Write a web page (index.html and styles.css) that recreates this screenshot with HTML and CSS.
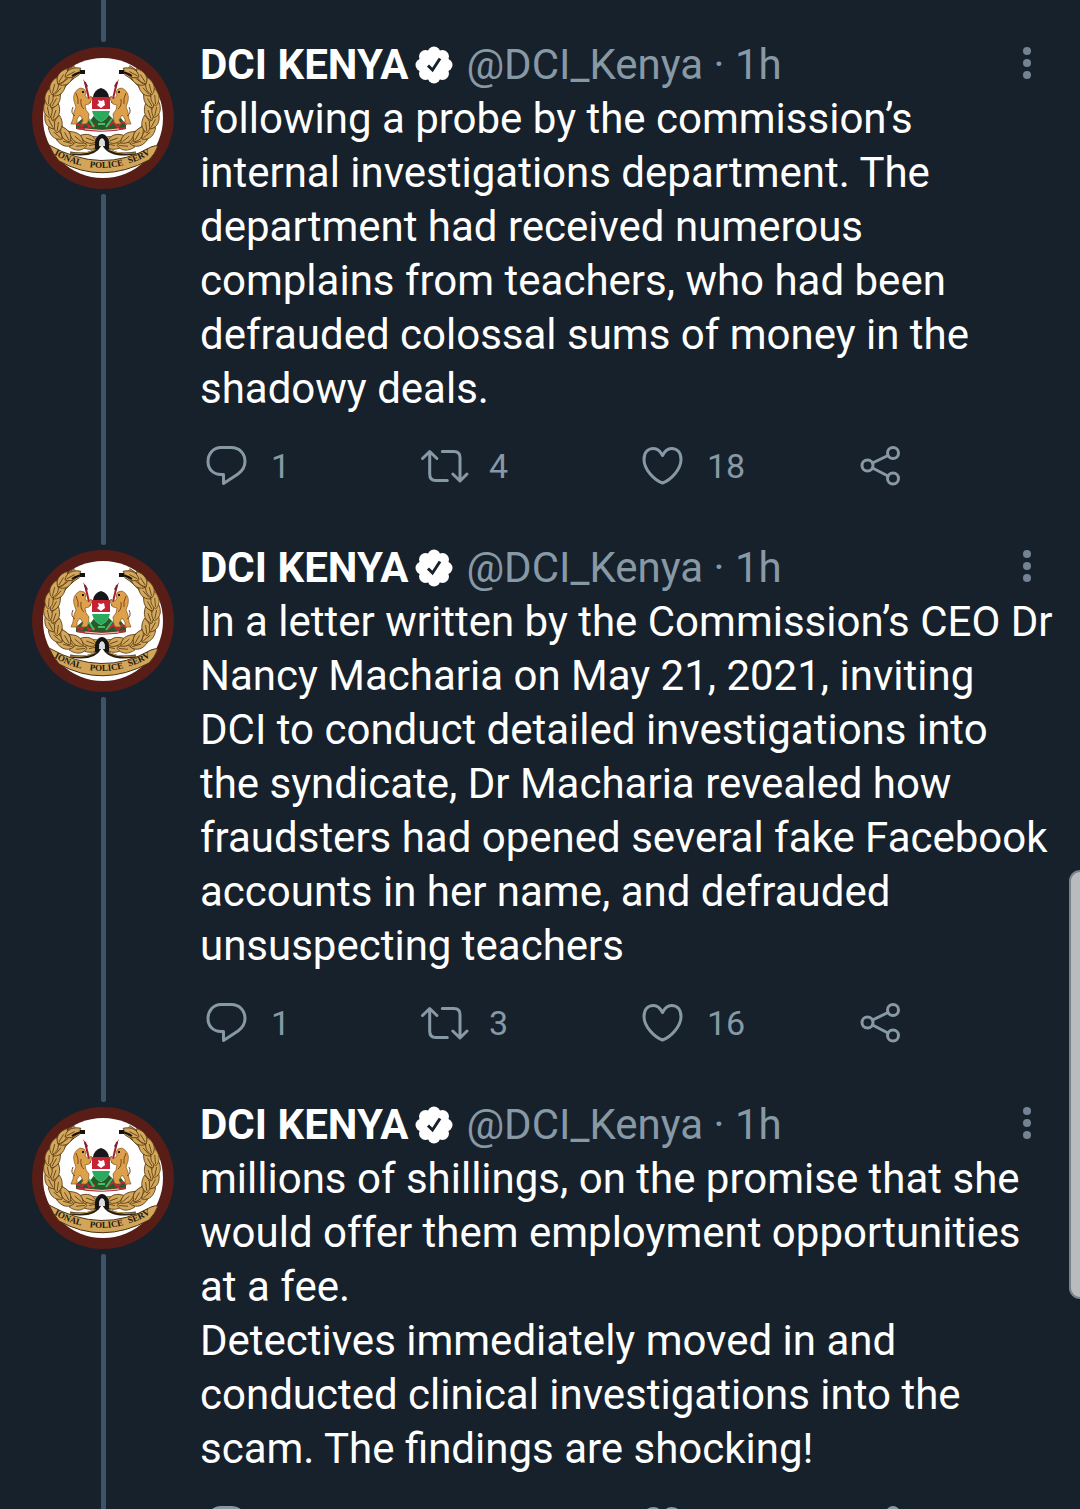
FILE: index.html
```html
<!DOCTYPE html>
<html lang="en">

<head>
    <meta charset="utf-8">
    <meta name="viewport" content="width=device-width, initial-scale=1.0">
    <title>DCI KENYA thread</title>
    <link rel="stylesheet" href="styles.css">
</head>

<body>

<!-- shared icons -->
<svg class="sprite" aria-hidden="true">
    <symbol id="badge" viewBox="0 0 38 38">
        <g fill="#fff">
            <circle cx="19" cy="19" r="15"/>
            <circle cx="19" cy="7" r="6.500"/>
            <circle cx="27.500" cy="10.500" r="6.500"/>
            <circle cx="31" cy="19" r="6.500"/>
            <circle cx="27.500" cy="27.500" r="6.500"/>
            <circle cx="19" cy="31" r="6.500"/>
            <circle cx="10.500" cy="27.500" r="6.500"/>
            <circle cx="7" cy="19" r="6.500"/>
            <circle cx="10.500" cy="10.500" r="6.500"/>
        </g>
        <path d="M13 19.500l4.500 4.500L25 12.500" fill="none" stroke="#17212b" stroke-width="3"/>
    </symbol>
    <symbol id="reply" viewBox="0 0 52 52">
        <path d="M21 7.500h10C40 7.500 45 14 45 21.500c0 5.500-3 9.500-7 12.500L23.500 43.500v-9H21C13 34.500 8 29 8 21.500S13 7.500 21 7.500z"/>
    </symbol>
    <symbol id="retweet" viewBox="0 0 52 52">
        <path d="M4.500 18.500l7.200-7 7.200 7M11.700 12V34q0 6.500 6 6.500h11.600M24.300 11.500H36q6 0 6 6V41M34.800 34l7.200 7 7-7"/>
    </symbol>
    <symbol id="heart" viewBox="0 0 52 52">
        <path d="M26.500 15.500C24 10.500 21 8.500 17.500 8.500 11.500 8.500 8 13 8 19.500c0 10 10.500 21 18.500 23.500C34.500 40.500 45 29.500 45 19.500c0-6.500-3.500-11-9.500-11-3.500 0-6.500 2-9 7z"/>
    </symbol>
    <symbol id="share" viewBox="0 0 52 52">
        <circle cx="13.500" cy="25.500" r="5.500"/>
        <circle cx="39" cy="13" r="5.500"/>
        <circle cx="39" cy="38.500" r="5.500"/>
        <path d="M18.500 23l15.500-7.500M18.500 28l15.500 8"/>
    </symbol>
    <symbol id="dots" viewBox="0 0 54 52">
        <circle cx="27" cy="12" r="4"/>
        <circle cx="27" cy="24" r="4"/>
        <circle cx="27" cy="36" r="4"/>
    </symbol>

    <!-- police service crest -->
    <symbol id="crest" viewBox="0 0 142 142">
        <defs>
            <path id="leaf" d="M0 8C-6 3-5-4 0-10 5-4 6 3 0 8zM0 6V-3" fill="#d3a75c" stroke="#5a3d12" stroke-width=".8"/>
            <g id="branch">
                <path d="M45 23C28 33 20 48 20 64c0 18 13 31 45 31" fill="none" stroke="#2b1c08" stroke-width="11"/>
                <path d="M45 23C28 33 20 48 20 64c0 18 13 31 45 31" fill="none" stroke="#cfa256" stroke-width="10"/>
                <use href="#leaf" transform="translate(60 98) rotate(-102)"/>
                <use href="#leaf" transform="translate(57 92) rotate(-70)"/>
                <use href="#leaf" transform="translate(47 99) rotate(-95)"/>
                <use href="#leaf" transform="translate(45 91) rotate(-50)"/>
                <use href="#leaf" transform="translate(34 95) rotate(-75)"/>
                <use href="#leaf" transform="translate(34 88) rotate(-30)"/>
                <use href="#leaf" transform="translate(24 87) rotate(-50)"/>
                <use href="#leaf" transform="translate(26 78) rotate(8)"/>
                <use href="#leaf" transform="translate(18 75) rotate(-28)"/>
                <use href="#leaf" transform="translate(23 66) rotate(20)"/>
                <use href="#leaf" transform="translate(16 63) rotate(-12)"/>
                <use href="#leaf" transform="translate(23 54) rotate(30)"/>
                <use href="#leaf" transform="translate(17 51) rotate(5)"/>
                <use href="#leaf" transform="translate(27 43) rotate(42)"/>
                <use href="#leaf" transform="translate(22 40) rotate(15)"/>
                <use href="#leaf" transform="translate(34 33) rotate(52)"/>
                <use href="#leaf" transform="translate(30 30) rotate(32)"/>
                <use href="#leaf" transform="translate(40 26) rotate(62)"/>
                <path d="M40 29q6-4 13-4" fill="none" stroke="#17120c" stroke-width="2"/>
                <path d="M48 25h5" stroke="#17120c" stroke-width="4"/>
            </g>
            <!-- lion holding a spear -->
            <g id="lion">
                <path d="M58 56L53 35" stroke="#a3222b" stroke-width="2"/>
                <path d="M51 32l5 7-2 2z" fill="#7b2430"/>
                <path d="M48 41q5 0 6 4l-1 4 4 3 2-3 1 3-3 5-4 1 1 5 3 4-1 8-2 2h-5l2-4-3-5-3 4v5h-6l2-5 1-7 2-5-2-6q-2-9 6-13z" fill="#dda04b" stroke="#8a5520" stroke-width=".7"/>
                <path d="M44 46q3 6 2 11M49 52q-1 7 3 10M43 69q-5-3-2-9" fill="none" stroke="#7d4918" stroke-width="1"/>
                <path d="M50 45h2" stroke="#22130a" stroke-width="2"/>
            </g>
        </defs>
        <circle cx="71" cy="71" r="71" fill="#571d16"/>
        <circle cx="71" cy="71" r="60" fill="#fff"/>
        <use href="#branch"/>
        <use href="#branch" transform="matrix(-1 0 0 1 140 0)"/>
        <path d="M38 106q24 4 30-8M104 106q-26 4-32-8" fill="none" stroke="#2c210f" stroke-width="3"/>
        <path d="M38 106q22 2 29-7M104 106q-24 2-31-7" fill="none" stroke="#cfa256" stroke-width="1"/>
        <path d="M65 102q-1-12 5-13 6 1 5 13" fill="none" stroke="#151515" stroke-width="4"/>
        <path d="M67 99q0-7 3-7t3 7z" fill="#ddd"/>
        <path d="M17 98Q70 128 119 100q5-2 7-1-3 8-9 14Q70 138 27 114 21 107 17 98z" fill="#d1a55a" stroke="#4b3110" stroke-width="1"/>
        <path d="M44 77l7-6 7 3 5-7 7 6 6-6 7 7 6-3 5 7v4q-25 5-50 0z" fill="#275b29"/>
        <path d="M44 77l6 2 4-5 3 6 6-2M76 79l5-4 5 5 4-5 5 2" fill="none" stroke="#c3283b" stroke-width="2"/>
        <path d="M45 81q24 5 49 0" fill="none" stroke="#b92b37" stroke-width="2"/>
        <path d="M53 82q17 3 34 0" fill="none" stroke="#f1c5bb" stroke-width="1"/>
        <use href="#lion"/>
        <use href="#lion" transform="matrix(-1 0 0 1 138 0)"/>
        <path d="M61 50Q62 43 69 41q7 2 8 9z" fill="#17171b"/>
        <path d="M60 50h18v14q-2 8-9 11-7-3-9-11z" fill="#fff"/>
        <path d="M60 50h18v12H60z" fill="#c52335"/>
        <path d="M60 64h18q-2 8-9 11-7-3-9-11z" fill="#29aa5d"/>
        <path d="M66 53l3 1 3-1 1 5-4 3-4-3 2-2z" fill="#fff"/>
        <path d="M57 72l5 8M80 72l-6 8M66 77h7" stroke="#46bd68" stroke-width="2"/>
    </symbol>
    <defs>
        <path id="ribbon" d="M21 107Q70 136 122 105"/>
    </defs>
</svg>

<main class="thread">

    <article class="tweet">
        <div class="rail">
            <svg class="avatar" viewBox="0 0 142 142" role="img" aria-label="DCI KENYA">
                <use href="#crest"/>
                <text><textPath href="#ribbon" startOffset="1">IONAL</textPath></text>
                <text><textPath href="#ribbon" startOffset="39">POLICE</textPath></text>
                <text><textPath href="#ribbon" startOffset="79">SERV</textPath></text>
            </svg>
        </div>
        <div class="content">
            <header>
                <h2>DCI KENYA</h2>
                <svg class="badge"><use href="#badge"/></svg>
                <span class="meta">@DCI_Kenya · 1h</span>
                <button class="more" aria-label="More"><svg><use href="#dots"/></svg></button>
            </header>
            <p>following a probe by the commission’s internal investigations department. The department had received numerous complains from teachers, who had been defrauded colossal sums of money in the shadowy deals.</p>
            <div class="actions">
                <button aria-label="Reply"><svg><use href="#reply"/></svg>1</button>
                <button aria-label="Retweet"><svg><use href="#retweet"/></svg>4</button>
                <button aria-label="Like"><svg><use href="#heart"/></svg>18</button>
                <button aria-label="Share"><svg><use href="#share"/></svg></button>
            </div>
        </div>
    </article>

    <article class="tweet">
        <div class="rail">
            <svg class="avatar" viewBox="0 0 142 142" role="img" aria-label="DCI KENYA">
                <use href="#crest"/>
                <text><textPath href="#ribbon" startOffset="1">IONAL</textPath></text>
                <text><textPath href="#ribbon" startOffset="39">POLICE</textPath></text>
                <text><textPath href="#ribbon" startOffset="79">SERV</textPath></text>
            </svg>
        </div>
        <div class="content">
            <header>
                <h2>DCI KENYA</h2>
                <svg class="badge"><use href="#badge"/></svg>
                <span class="meta">@DCI_Kenya · 1h</span>
                <button class="more" aria-label="More"><svg><use href="#dots"/></svg></button>
            </header>
            <p>In a letter written by the Commission’s CEO Dr Nancy Macharia on May 21, 2021, inviting<br> DCI to conduct detailed investigations into<br> the syndicate, Dr Macharia revealed how fraudsters had opened several fake Facebook accounts in her name, and defrauded unsuspecting teachers</p>
            <div class="actions">
                <button aria-label="Reply"><svg><use href="#reply"/></svg>1</button>
                <button aria-label="Retweet"><svg><use href="#retweet"/></svg>3</button>
                <button aria-label="Like"><svg><use href="#heart"/></svg>16</button>
                <button aria-label="Share"><svg><use href="#share"/></svg></button>
            </div>
        </div>
    </article>

    <article class="tweet">
        <div class="rail">
            <svg class="avatar" viewBox="0 0 142 142" role="img" aria-label="DCI KENYA">
                <use href="#crest"/>
                <text><textPath href="#ribbon" startOffset="1">IONAL</textPath></text>
                <text><textPath href="#ribbon" startOffset="39">POLICE</textPath></text>
                <text><textPath href="#ribbon" startOffset="79">SERV</textPath></text>
            </svg>
        </div>
        <div class="content">
            <header>
                <h2>DCI KENYA</h2>
                <svg class="badge"><use href="#badge"/></svg>
                <span class="meta">@DCI_Kenya · 1h</span>
                <button class="more" aria-label="More"><svg><use href="#dots"/></svg></button>
            </header>
            <p>millions of shillings, on the promise that she would offer them employment opportunities at a fee.<br>Detectives immediately moved in and conducted clinical investigations into the scam. The findings are shocking!</p>
            <div class="actions">
                <button aria-label="Reply"><svg><use href="#reply"/></svg></button>
                <button aria-label="Retweet"><svg><use href="#retweet"/></svg></button>
                <button aria-label="Like"><svg><use href="#heart"/></svg></button>
                <button aria-label="Share"><svg><use href="#share"/></svg></button>
            </div>
        </div>
    </article>

</main>

<div class="scroll-thumb"></div>

</body>

</html>
```
FILE: styles.css
```css
* {
    box-sizing: border-box;
}

body {
    margin: 0;
    background-color: #17212b;
    color: #fff;
    font-family: Roboto, sans-serif;
    font-size: 42px;
    line-height: 54px;
}

.sprite {
    position: absolute;
    width: 0;
    height: 0;
}

.thread {
    height: 100vh;
    overflow: hidden;
}

.tweet {
    display: flex;
    gap: 26px;
    padding: 0 26px 0 32px;
}

/* avatar with the thread line above and below it */
.rail {
    display: flex;
    flex-direction: column;
    align-items: center;
    gap: 5px;
    flex: none;
    width: 142px;
}

.rail::before,
.rail::after {
    content: "";
    width: 5px;
    background-color: #3d5466;
}

.rail::before {
    height: 42px;
    border-radius: 0 0 2px 2px;
}

.rail::after {
    flex: 1;
    border-radius: 2px 2px 0 0;
}

.avatar {
    display: block;
    width: 142px;
    height: 142px;
}

.avatar text {
    fill: #24180b;
    font-family: "Liberation Serif", serif;
    font-size: 9px;
    font-weight: bold;
}

.content {
    flex: 1;
    min-width: 0;
    padding-top: 38px;
}

header {
    display: flex;
    align-items: center;
    height: 54px;
}

h2 {
    margin: 0;
    font-size: 42px;
    font-weight: bold;
}

.badge {
    width: 38px;
    height: 38px;
    margin: 0 13px 0 7px;
}

.meta {
    color: #8899a6;
}

button {
    display: flex;
    align-items: center;
    padding: 0;
    border: 0;
    background: none;
    color: #8899a6;
    font-family: inherit;
    cursor: pointer;
}

.more {
    margin-left: auto;
}

.more svg {
    width: 54px;
    height: 52px;
    fill: #748393;
}

p {
    margin: 0;
}

.actions {
    display: grid;
    grid-template-columns: 1fr 1fr 1fr 200px;
    padding: 24px 0 11px;
}

.actions button {
    gap: 19px;
    font-size: 34px;
}

.actions svg {
    width: 52px;
    height: 52px;
    fill: none;
    stroke: #8899a6;
    stroke-width: 3px;
    stroke-linecap: round;
    stroke-linejoin: round;
}

.scroll-thumb {
    position: fixed;
    top: 870px;
    right: 0;
    width: 11px;
    height: 429px;
    border: 2px solid #7b8287;
    border-right: 0;
    border-radius: 12px 0 0 12px;
    background-color: #b8bcbf;
}
```
